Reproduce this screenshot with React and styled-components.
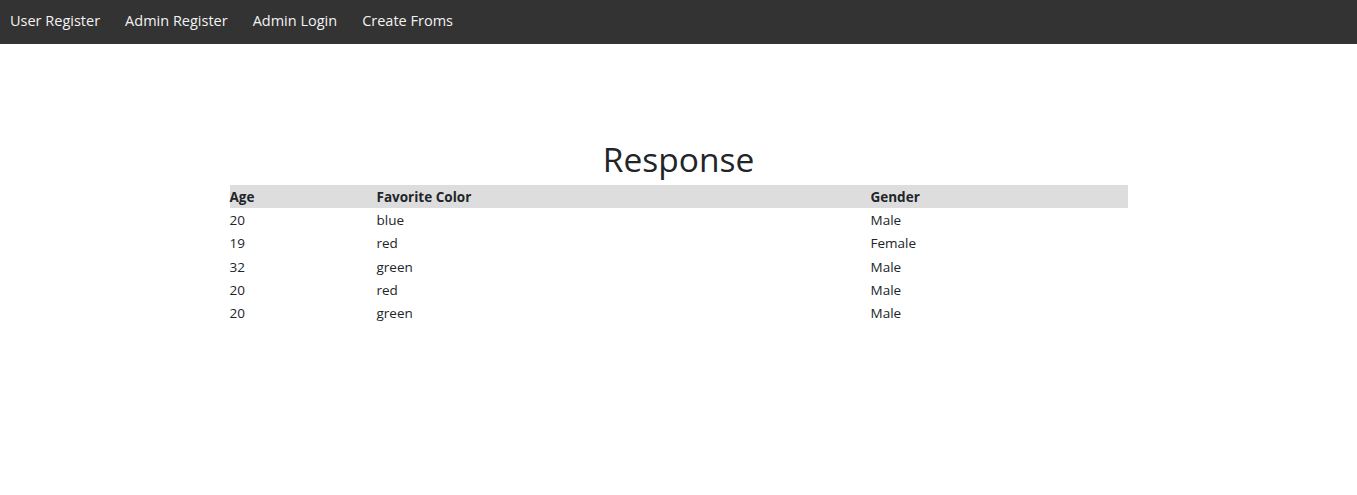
import React from 'react';
import styled, { createGlobalStyle } from 'styled-components';

const GlobalStyle = createGlobalStyle`
  body {
    margin: 0;
    background: #fff;
    color: #212529;
    font-family: "Open Sans", "Noto Sans", sans-serif;
  }
`;

const NavBar = styled.nav`
  display: flex;
  align-items: center;
  height: 44px;
  box-sizing: border-box;
  background: #333;
  padding: 0 0 3px 10px;
`;

const NavLink = styled.a`
  color: #f2f2f2;
  font-size: 14.5px;
  text-decoration: none;
  margin-right: 25px;
  cursor: pointer;
`;

const Main = styled.main`
  width: 898px;
  margin: 89px auto 0;
`;

const Title = styled.h1`
  margin: 0;
  font-size: 33.5px;
  font-weight: 400;
  line-height: 52px;
  text-align: center;
  color: #212529;
`;

const Table = styled.table`
  width: 100%;
  border-collapse: collapse;
  font-size: 13.5px;
`;

const HeadCell = styled.th`
  background: #ddd;
  text-align: left;
  font-weight: 700;
  padding: 2px 0 0;
  line-height: 21px;
  width: ${(p) => p.$w}px;
`;

const Cell = styled.td`
  padding: 2px 0 0;
  line-height: 21.3px;
`;

const rows = [
  { age: 20, color: 'blue', gender: 'Male' },
  { age: 19, color: 'red', gender: 'Female' },
  { age: 32, color: 'green', gender: 'Male' },
  { age: 20, color: 'red', gender: 'Male' },
  { age: 20, color: 'green', gender: 'Male' },
];

export default function App() {
  return (
    <>
      <GlobalStyle />
      <NavBar>
        <NavLink>User Register</NavLink>
        <NavLink>Admin Register</NavLink>
        <NavLink>Admin Login</NavLink>
        <NavLink>Create Froms</NavLink>
      </NavBar>
      <Main>
        <Title>Response</Title>
        <Table>
          <thead>
            <tr>
              <HeadCell $w={147}>Age</HeadCell>
              <HeadCell $w={494}>Favorite Color</HeadCell>
              <HeadCell $w={257}>Gender</HeadCell>
            </tr>
          </thead>
          <tbody>
            {rows.map((r, i) => (
              <tr key={i}>
                <Cell>{r.age}</Cell>
                <Cell>{r.color}</Cell>
                <Cell>{r.gender}</Cell>
              </tr>
            ))}
          </tbody>
        </Table>
      </Main>
    </>
  );
}
